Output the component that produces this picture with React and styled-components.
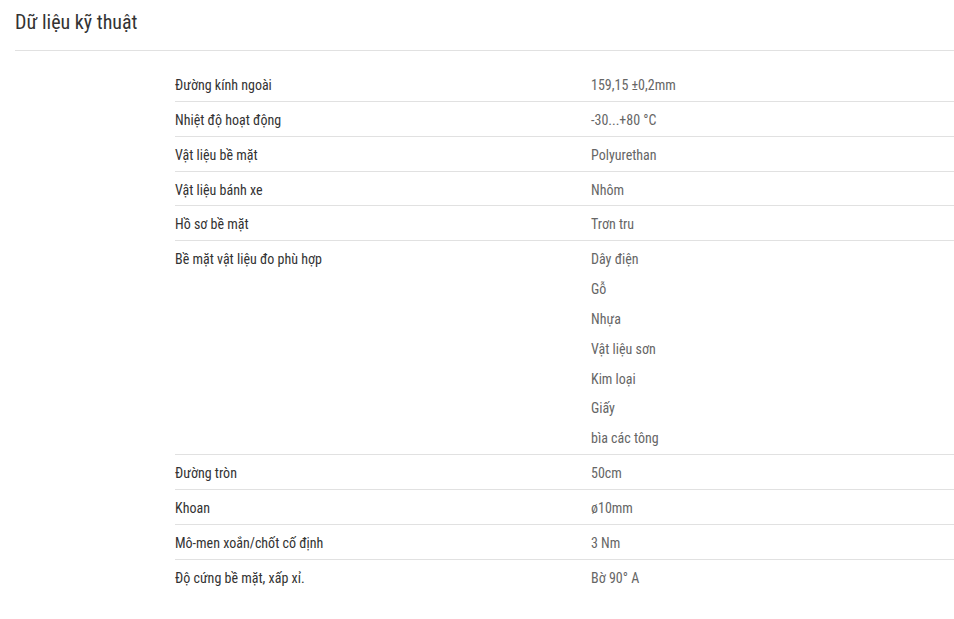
import React from 'react';
import styled, { createGlobalStyle } from 'styled-components';

const GlobalStyle = createGlobalStyle`
  body {
    margin: 0;
    background: #fff;
    font-family: "Roboto Condensed", Roboto, "Liberation Sans", sans-serif;
  }
`;

const Section = styled.section`
  padding: 0 0 0 15px;
`;

const Heading = styled.h2`
  margin: 0;
  padding: 9px 0 15px;
  font-size: 20px;
  font-weight: 400;
  line-height: 26px;
  color: #333;
  border-bottom: 1px solid #e1e1e1;
  font-stretch: condensed;
`;

const Table = styled.div`
  margin: 16.2px 0 0 160px;
`;

const Row = styled.div`
  display: grid;
  grid-template-columns: 416px 1fr;
  padding: 10px 0 6px;
  border-bottom: 1px solid ${p => (p.$last ? 'transparent' : '#e1e1e1')};
  font-size: 14px;
  line-height: 17.8px;
  font-stretch: condensed;
`;

const Label = styled.div`
  color: #333;
`;

const Values = styled.div`
  display: flex;
  flex-direction: column;
  gap: 12.067px;
  color: #666;
`;

const rows = [
  ['Đường kính ngoài', ['159,15 ±0,2mm']],
  ['Nhiệt độ hoạt động', ['-30...+80 °C']],
  ['Vật liệu bề mặt', ['Polyurethan']],
  ['Vật liệu bánh xe', ['Nhôm']],
  ['Hồ sơ bề mặt', ['Trơn tru']],
  [
    'Bề mặt vật liệu đo phù hợp',
    ['Dây điện', 'Gỗ', 'Nhựa', 'Vật liệu sơn', 'Kim loại', 'Giấy', 'bìa các tông'],
  ],
  ['Đường tròn', ['50cm']],
  ['Khoan', ['ø10mm']],
  ['Mô-men xoắn/chốt cố định', ['3 Nm']],
  ['Độ cứng bề mặt, xấp xỉ.', ['Bờ 90° A']],
];

const App = () => {
  return (
    <>
      <GlobalStyle />
      <Section>
        <Heading>Dữ liệu kỹ thuật</Heading>
        <Table>
          {rows.map(([label, values], i) => (
            <Row key={label} $last={i === rows.length - 1}>
              <Label>{label}</Label>
              <Values>
                {values.map(v => (
                  <span key={v}>{v}</span>
                ))}
              </Values>
            </Row>
          ))}
        </Table>
      </Section>
    </>
  );
};

export default App;
